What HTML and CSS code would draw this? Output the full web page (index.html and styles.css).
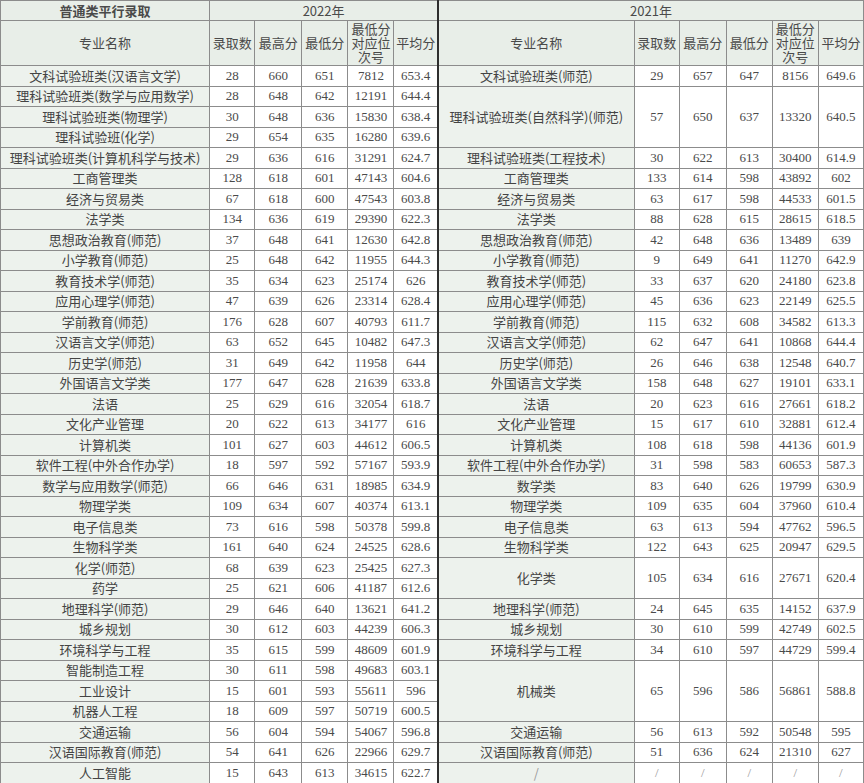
FILE: index.html
```html
<!DOCTYPE html>
<html lang="zh-CN">
<head>
<meta charset="utf-8">
<title>普通类平行录取</title>
<link rel="stylesheet" href="styles.css">
</head>
<body>
<table class="sheet">
<colgroup>
<col class="w-name-l"><col class="w-45"><col class="w-47"><col class="w-46"><col class="w-46"><col class="w-44">
<col class="w-name-r"><col class="w-45"><col class="w-47"><col class="w-46"><col class="w-46"><col class="w-45">
</colgroup>
<tr class="head r1">
<td class="title">普通类平行录取</td>
<td colspan="5" class="year">2022年</td>
<td colspan="6" class="year split">2021年</td>
</tr>
<tr class="head r2">
<td>专业名称</td><td>录取数</td><td>最高分</td><td>最低分</td><td class="wrap"><span class="ln">最低分</span><span class="ln">对应位</span><span class="ln">次号</span></td><td>平均分</td>
<td class="split">专业名称</td><td>录取数</td><td>最高分</td><td>最低分</td><td class="wrap"><span class="ln">最低分</span><span class="ln">对应位</span><span class="ln">次号</span></td><td>平均分</td>
</tr>
<tr class="row">
<td class="name">文科试验班类(汉语言文学)</td><td class="num">28</td><td class="num">660</td><td class="num">651</td><td class="num">7812</td><td class="num">653.4</td>
<td class="name split">文科试验班类(师范)</td><td class="num">29</td><td class="num">657</td><td class="num">647</td><td class="num">8156</td><td class="num">649.6</td>
</tr>
<tr class="row">
<td class="name">理科试验班类(数学与应用数学)</td><td class="num">28</td><td class="num">648</td><td class="num">642</td><td class="num">12191</td><td class="num">644.4</td>
<td class="name split" rowspan="3">理科试验班类(自然科学)(师范)</td><td class="num" rowspan="3">57</td><td class="num" rowspan="3">650</td><td class="num" rowspan="3">637</td><td class="num" rowspan="3">13320</td><td class="num" rowspan="3">640.5</td>
</tr>
<tr class="row">
<td class="name">理科试验班类(物理学)</td><td class="num">30</td><td class="num">648</td><td class="num">636</td><td class="num">15830</td><td class="num">638.4</td>
</tr>
<tr class="row">
<td class="name">理科试验班(化学)</td><td class="num">29</td><td class="num">654</td><td class="num">635</td><td class="num">16280</td><td class="num">639.6</td>
</tr>
<tr class="row">
<td class="name">理科试验班类(计算机科学与技术)</td><td class="num">29</td><td class="num">636</td><td class="num">616</td><td class="num">31291</td><td class="num">624.7</td>
<td class="name split">理科试验班类(工程技术)</td><td class="num">30</td><td class="num">622</td><td class="num">613</td><td class="num">30400</td><td class="num">614.9</td>
</tr>
<tr class="row">
<td class="name">工商管理类</td><td class="num">128</td><td class="num">618</td><td class="num">601</td><td class="num">47143</td><td class="num">604.6</td>
<td class="name split">工商管理类</td><td class="num">133</td><td class="num">614</td><td class="num">598</td><td class="num">43892</td><td class="num">602</td>
</tr>
<tr class="row">
<td class="name">经济与贸易类</td><td class="num">67</td><td class="num">618</td><td class="num">600</td><td class="num">47543</td><td class="num">603.8</td>
<td class="name split">经济与贸易类</td><td class="num">63</td><td class="num">617</td><td class="num">598</td><td class="num">44533</td><td class="num">601.5</td>
</tr>
<tr class="row">
<td class="name">法学类</td><td class="num">134</td><td class="num">636</td><td class="num">619</td><td class="num">29390</td><td class="num">622.3</td>
<td class="name split">法学类</td><td class="num">88</td><td class="num">628</td><td class="num">615</td><td class="num">28615</td><td class="num">618.5</td>
</tr>
<tr class="row">
<td class="name">思想政治教育(师范)</td><td class="num">37</td><td class="num">648</td><td class="num">641</td><td class="num">12630</td><td class="num">642.8</td>
<td class="name split">思想政治教育(师范)</td><td class="num">42</td><td class="num">648</td><td class="num">636</td><td class="num">13489</td><td class="num">639</td>
</tr>
<tr class="row">
<td class="name">小学教育(师范)</td><td class="num">25</td><td class="num">648</td><td class="num">642</td><td class="num">11955</td><td class="num">644.3</td>
<td class="name split">小学教育(师范)</td><td class="num">9</td><td class="num">649</td><td class="num">641</td><td class="num">11270</td><td class="num">642.9</td>
</tr>
<tr class="row">
<td class="name">教育技术学(师范)</td><td class="num">35</td><td class="num">634</td><td class="num">623</td><td class="num">25174</td><td class="num">626</td>
<td class="name split">教育技术学(师范)</td><td class="num">33</td><td class="num">637</td><td class="num">620</td><td class="num">24180</td><td class="num">623.8</td>
</tr>
<tr class="row">
<td class="name">应用心理学(师范)</td><td class="num">47</td><td class="num">639</td><td class="num">626</td><td class="num">23314</td><td class="num">628.4</td>
<td class="name split">应用心理学(师范)</td><td class="num">45</td><td class="num">636</td><td class="num">623</td><td class="num">22149</td><td class="num">625.5</td>
</tr>
<tr class="row">
<td class="name">学前教育(师范)</td><td class="num">176</td><td class="num">628</td><td class="num">607</td><td class="num">40793</td><td class="num">611.7</td>
<td class="name split">学前教育(师范)</td><td class="num">115</td><td class="num">632</td><td class="num">608</td><td class="num">34582</td><td class="num">613.3</td>
</tr>
<tr class="row">
<td class="name">汉语言文学(师范)</td><td class="num">63</td><td class="num">652</td><td class="num">645</td><td class="num">10482</td><td class="num">647.3</td>
<td class="name split">汉语言文学(师范)</td><td class="num">62</td><td class="num">647</td><td class="num">641</td><td class="num">10868</td><td class="num">644.4</td>
</tr>
<tr class="row">
<td class="name">历史学(师范)</td><td class="num">31</td><td class="num">649</td><td class="num">642</td><td class="num">11958</td><td class="num">644</td>
<td class="name split">历史学(师范)</td><td class="num">26</td><td class="num">646</td><td class="num">638</td><td class="num">12548</td><td class="num">640.7</td>
</tr>
<tr class="row">
<td class="name">外国语言文学类</td><td class="num">177</td><td class="num">647</td><td class="num">628</td><td class="num">21639</td><td class="num">633.8</td>
<td class="name split">外国语言文学类</td><td class="num">158</td><td class="num">648</td><td class="num">627</td><td class="num">19101</td><td class="num">633.1</td>
</tr>
<tr class="row">
<td class="name">法语</td><td class="num">25</td><td class="num">629</td><td class="num">616</td><td class="num">32054</td><td class="num">618.7</td>
<td class="name split">法语</td><td class="num">20</td><td class="num">623</td><td class="num">616</td><td class="num">27661</td><td class="num">618.2</td>
</tr>
<tr class="row">
<td class="name">文化产业管理</td><td class="num">20</td><td class="num">622</td><td class="num">613</td><td class="num">34177</td><td class="num">616</td>
<td class="name split">文化产业管理</td><td class="num">15</td><td class="num">617</td><td class="num">610</td><td class="num">32881</td><td class="num">612.4</td>
</tr>
<tr class="row">
<td class="name">计算机类</td><td class="num">101</td><td class="num">627</td><td class="num">603</td><td class="num">44612</td><td class="num">606.5</td>
<td class="name split">计算机类</td><td class="num">108</td><td class="num">618</td><td class="num">598</td><td class="num">44136</td><td class="num">601.9</td>
</tr>
<tr class="row">
<td class="name">软件工程(中外合作办学)</td><td class="num">18</td><td class="num">597</td><td class="num">592</td><td class="num">57167</td><td class="num">593.9</td>
<td class="name split">软件工程(中外合作办学)</td><td class="num">31</td><td class="num">598</td><td class="num">583</td><td class="num">60653</td><td class="num">587.3</td>
</tr>
<tr class="row">
<td class="name">数学与应用数学(师范)</td><td class="num">66</td><td class="num">646</td><td class="num">631</td><td class="num">18985</td><td class="num">634.9</td>
<td class="name split">数学类</td><td class="num">83</td><td class="num">640</td><td class="num">626</td><td class="num">19799</td><td class="num">630.9</td>
</tr>
<tr class="row">
<td class="name">物理学类</td><td class="num">109</td><td class="num">634</td><td class="num">607</td><td class="num">40374</td><td class="num">613.1</td>
<td class="name split">物理学类</td><td class="num">109</td><td class="num">635</td><td class="num">604</td><td class="num">37960</td><td class="num">610.4</td>
</tr>
<tr class="row">
<td class="name">电子信息类</td><td class="num">73</td><td class="num">616</td><td class="num">598</td><td class="num">50378</td><td class="num">599.8</td>
<td class="name split">电子信息类</td><td class="num">63</td><td class="num">613</td><td class="num">594</td><td class="num">47762</td><td class="num">596.5</td>
</tr>
<tr class="row">
<td class="name">生物科学类</td><td class="num">161</td><td class="num">640</td><td class="num">624</td><td class="num">24525</td><td class="num">628.6</td>
<td class="name split">生物科学类</td><td class="num">122</td><td class="num">643</td><td class="num">625</td><td class="num">20947</td><td class="num">629.5</td>
</tr>
<tr class="row">
<td class="name">化学(师范)</td><td class="num">68</td><td class="num">639</td><td class="num">623</td><td class="num">25425</td><td class="num">627.3</td>
<td class="name split" rowspan="2">化学类</td><td class="num" rowspan="2">105</td><td class="num" rowspan="2">634</td><td class="num" rowspan="2">616</td><td class="num" rowspan="2">27671</td><td class="num" rowspan="2">620.4</td>
</tr>
<tr class="row">
<td class="name">药学</td><td class="num">25</td><td class="num">621</td><td class="num">606</td><td class="num">41187</td><td class="num">612.6</td>
</tr>
<tr class="row">
<td class="name">地理科学(师范)</td><td class="num">29</td><td class="num">646</td><td class="num">640</td><td class="num">13621</td><td class="num">641.2</td>
<td class="name split">地理科学(师范)</td><td class="num">24</td><td class="num">645</td><td class="num">635</td><td class="num">14152</td><td class="num">637.9</td>
</tr>
<tr class="row">
<td class="name">城乡规划</td><td class="num">30</td><td class="num">612</td><td class="num">603</td><td class="num">44239</td><td class="num">606.3</td>
<td class="name split">城乡规划</td><td class="num">30</td><td class="num">610</td><td class="num">599</td><td class="num">42749</td><td class="num">602.5</td>
</tr>
<tr class="row">
<td class="name">环境科学与工程</td><td class="num">35</td><td class="num">615</td><td class="num">599</td><td class="num">48609</td><td class="num">601.9</td>
<td class="name split">环境科学与工程</td><td class="num">34</td><td class="num">610</td><td class="num">597</td><td class="num">44729</td><td class="num">599.4</td>
</tr>
<tr class="row">
<td class="name">智能制造工程</td><td class="num">30</td><td class="num">611</td><td class="num">598</td><td class="num">49683</td><td class="num">603.1</td>
<td class="name split" rowspan="3">机械类</td><td class="num" rowspan="3">65</td><td class="num" rowspan="3">596</td><td class="num" rowspan="3">586</td><td class="num" rowspan="3">56861</td><td class="num" rowspan="3">588.8</td>
</tr>
<tr class="row">
<td class="name">工业设计</td><td class="num">15</td><td class="num">601</td><td class="num">593</td><td class="num">55611</td><td class="num">596</td>
</tr>
<tr class="row">
<td class="name">机器人工程</td><td class="num">18</td><td class="num">609</td><td class="num">597</td><td class="num">50719</td><td class="num">600.5</td>
</tr>
<tr class="row">
<td class="name">交通运输</td><td class="num">56</td><td class="num">604</td><td class="num">594</td><td class="num">54067</td><td class="num">596.8</td>
<td class="name split">交通运输</td><td class="num">56</td><td class="num">613</td><td class="num">592</td><td class="num">50548</td><td class="num">595</td>
</tr>
<tr class="row">
<td class="name">汉语国际教育(师范)</td><td class="num">54</td><td class="num">641</td><td class="num">626</td><td class="num">22966</td><td class="num">629.7</td>
<td class="name split">汉语国际教育(师范)</td><td class="num">51</td><td class="num">636</td><td class="num">624</td><td class="num">21310</td><td class="num">627</td>
</tr>
<tr class="row">
<td class="name">人工智能</td><td class="num">15</td><td class="num">643</td><td class="num">613</td><td class="num">34615</td><td class="num">622.7</td>
<td class="name split slash">/</td><td class="num slash">/</td><td class="num slash">/</td><td class="num slash">/</td><td class="num slash">/</td><td class="num slash">/</td>
</tr>
</table>
</body>
</html>
```

FILE: styles.css
```css
html, body {
  margin: 0;
  padding: 0;
  background: #ffffff;
}

.sheet {
  border-collapse: collapse;
  table-layout: fixed;
  width: 864px;
  font-family: "Noto Sans CJK SC", "Noto Sans", sans-serif;
  font-size: 13px;
  color: #4a4a4a;
}

.w-name-l { width: 209px; }
.w-name-r { width: 196px; }
.w-44 { width: 44px; }
.w-45 { width: 45px; }
.w-46 { width: 46px; }
.w-47 { width: 47px; }

.sheet td {
  border: 1px solid #8c8c8c;
  padding: 0;
  text-align: center;
  vertical-align: middle;
  white-space: nowrap;
  overflow: hidden;
  line-height: 16px;
}

.head td {
  background: #e8eee8;
  color: #4a4a4a;
}

.r1 td {
  height: 19px;
}

.r2 td {
  height: 44px;
}

.row td {
  height: 19.5px;
}

.title {
  font-weight: bold;
  color: #222222;
}

.year {
  color: #3a3a3a;
}

.sheet td.wrap {
  line-height: 14px;
}

.ln {
  display: block;
  height: 14px;
  line-height: 14px;
}

.name {
  background: #edf2ed;
  color: #444444;
}

.num {
  font-family: "Liberation Serif", "Times New Roman", serif;
  font-size: 13px;
  color: #4a4a4a;
}

.slash {
  color: #9a9a9a;
}

.sheet td.split {
  border-left: 2px solid #2e2e2e;
}
```
